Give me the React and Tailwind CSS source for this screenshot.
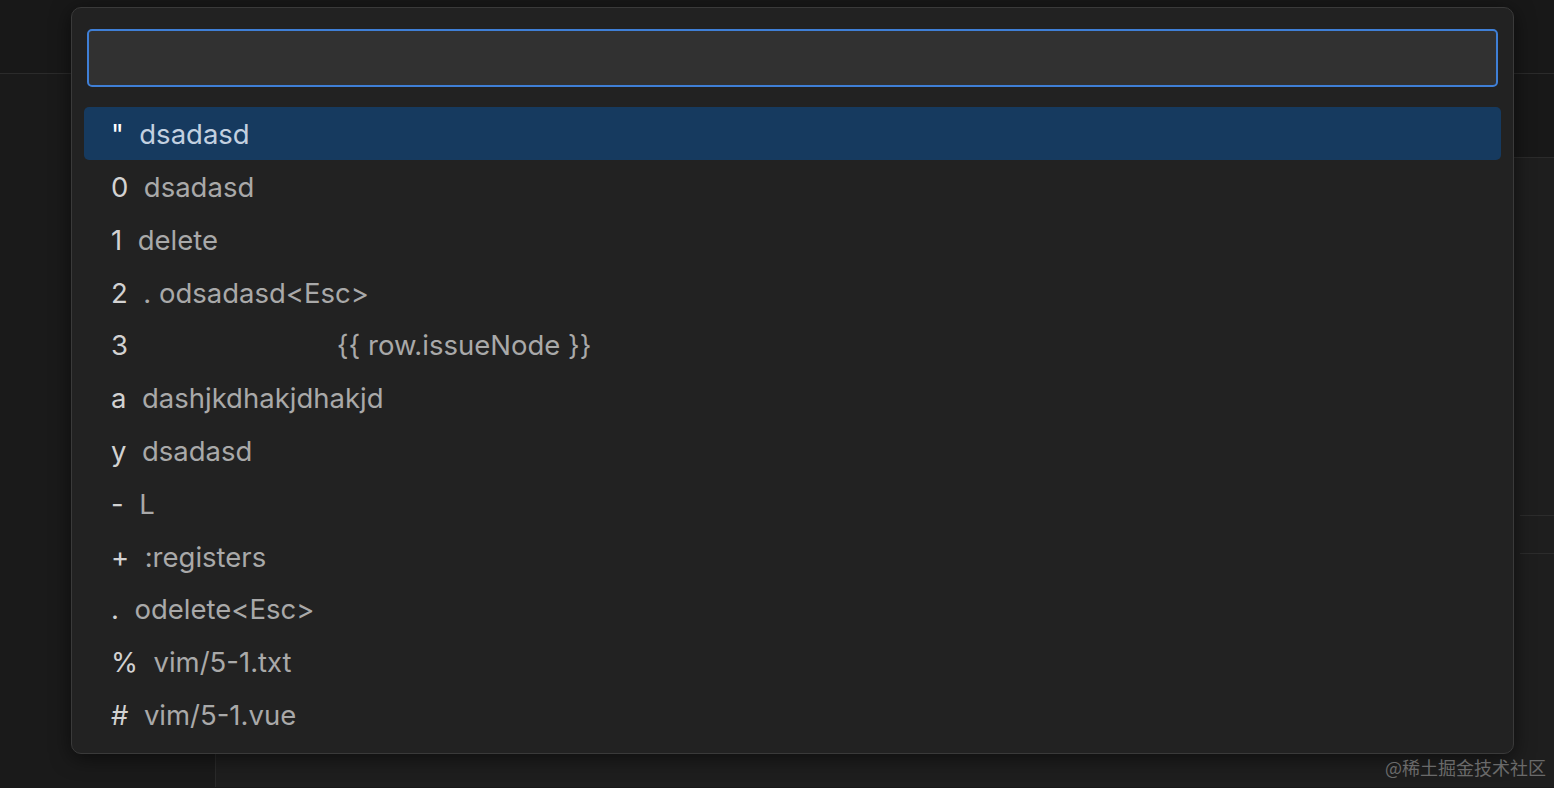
import React from "react";

const rows = [
  { k: '"', v: "dsadasd" },
  { k: "0", v: "dsadasd" },
  { k: "1", v: "delete" },
  { k: "2", v: ". odsadasd<Esc>" },
  { k: "3", v: "                         {{ row.issueNode }}" },
  { k: "a", v: "dashjkdhakjdhakjd" },
  { k: "y", v: "dsadasd" },
  { k: "-", v: "L" },
  { k: "+", v: ":registers" },
  { k: ".", v: "odelete<Esc>" },
  { k: "%", v: "vim/5-1.txt" },
  { k: "#", v: "vim/5-1.vue" },
];

export default function App() {
  return (
    <div
      className="relative w-[1554px] h-[788px] overflow-hidden bg-[#191919]"
      style={{ fontFamily: 'Inter, "Noto Sans", sans-serif' }}
    >
      {/* background editor chrome */}
      <div className="h-[74px] border-b border-[#2b2b2b] bg-[#181818]" />
      <div className="flex h-[713px]">
        <div className="w-[216px] border-r border-[#2a2a2a] bg-[#1a1a1a]" />
        <div className="flex-1 flex flex-col bg-[#1e1e1e]">
          <div className="h-[84px] border-b border-[#2b2b2b] bg-[#181818]" />
          <div className="h-[357px]" />
          <div className="h-[39px] border-t border-b border-[#2c2c2c] ml-[1304px]" />
          <div className="flex-1" />
        </div>
      </div>

      {/* quick pick overlay */}
      <div className="absolute left-[71px] top-[7px] w-[1443px] h-[747px] rounded-[10px] border border-[#3a3a3a] bg-[#222222] shadow-[0_4px_20px_rgba(0,0,0,0.55)] px-[12px] pt-[21px] pb-[12px]">
        <div className="mx-[3px] h-[58px] rounded-[5px] border-2 border-[#3f7fd6] bg-[#313131]" />
        <div className="mt-[20px] flex flex-col">
          {rows.map((r, i) => (
            <div
              key={i}
              className={
                "h-[52.8px] flex items-center pl-[27px] pt-[3px] rounded-[5px] text-[27.5px] whitespace-pre " +
                (i === 0 ? "bg-[#163a5f]" : "")
              }
            >
              <span className={i === 0 ? "text-[#ffffff]" : "text-[#d2d2d2]"}>{r.k}</span>
              <span className={i === 0 ? "text-[#c2d0e0]" : "text-[#a9a9a9]"}>{"  " + r.v}</span>
            </div>
          ))}
        </div>
      </div>

      <div
        className="absolute right-[8px] bottom-[7px] text-[18px] text-[#6a6a6a]"
        style={{ fontFamily: '"Noto Sans CJK SC", sans-serif' }}
      >
        @稀土掘金技术社区
      </div>
    </div>
  );
}
